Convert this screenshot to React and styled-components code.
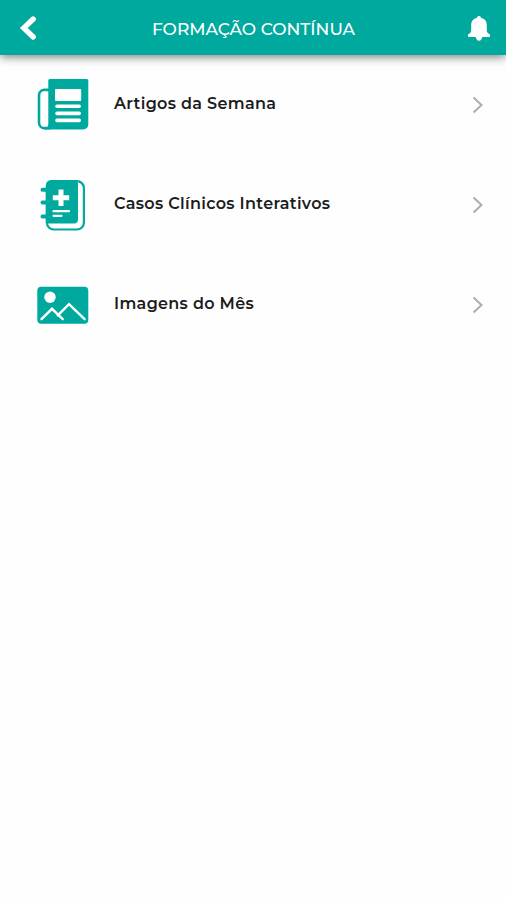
import React from 'react';
import styled, { createGlobalStyle } from 'styled-components';

const GlobalStyle = createGlobalStyle`
  * {
    box-sizing: border-box;
  }

  body {
    margin: 0;
    background-color: #fefefe;
    font-family: Montserrat, Inter, sans-serif;
  }
`;

const Screen = styled.div`
  display: flex;
  flex-direction: column;
  min-height: 100vh;
`;

const Header = styled.header`
  display: flex;
  align-items: center;
  justify-content: space-between;
  height: 55px;
  padding: 1px 14px 0 19px;
  background-color: #00a99d;
  box-shadow: 0 2px 9px rgba(0, 0, 0, 0.5);
  color: white;
`;

const HeaderButton = styled.button`
  display: flex;
  min-width: 22px;
  padding: 0;
  border: none;
  background: none;
  color: inherit;
  cursor: pointer;
`;

const Title = styled.h1`
  margin: 0;
  padding-top: 1px;
  font-size: 17px;
  font-weight: 500;
  line-height: 24px;
  white-space: nowrap;
`;

const List = styled.ul`
  margin: 0;
  padding: 0;
  list-style: none;
`;

const Row = styled.li`
  display: flex;
  align-items: center;
  height: 100.4px;
  padding: 0 21.5px 0 36px;
  border-bottom: 1px solid #fcfcfc;
`;

const IconBox = styled.div`
  display: flex;
  width: 54px;
  height: 54px;
  margin-bottom: 1px;
  color: #00a99d;
`;

const Label = styled.span`
  flex: 1;
  padding: 0 0 2px 24px;
  color: #1c1c1c;
  font-size: 16px;
  font-weight: 600;
  line-height: 24px;
  letter-spacing: 0.32px;
  white-space: nowrap;
`;

const BackIcon = () => (
  <svg width="19" height="28" viewBox="0 0 19 28" fill="none">
    <path
      d="M14.2 5 4.8 14l9.4 9"
      stroke="currentColor"
      strokeWidth="5.4"
      strokeLinecap="round"
    />
  </svg>
);

const BellIcon = () => (
  <svg width="26" height="28" viewBox="0 0 26 28" fill="currentColor">
    <path d="M13 2c1.1 0 1.8.7 2 1.7 3.6.8 5.8 3.7 5.8 7.3v5.4c0 1.7 1.1 2.7 2.8 3.9.9.7.6 2.7-.5 2.7H2.9c-1.1 0-1.4-2-.5-2.7 1.7-1.2 2.8-2.2 2.8-3.9V11c0-3.6 2.2-6.5 5.8-7.3.2-1 .9-1.7 2-1.7z" />
    <path d="M9.7 22.5h6.6c-.3 2.5-1.5 4.2-3.3 4.2s-3-1.7-3.3-4.2z" />
  </svg>
);

const ArrowIcon = () => (
  <svg width="14" height="20" viewBox="0 0 14 20" fill="none">
    <path d="M2.5 2.5 10.5 10l-8 7.5" stroke="#adadad" strokeWidth="2" />
  </svg>
);

const NewsIcon = () => (
  <svg width="54" height="54" viewBox="0 0 54 54">
    <path
      d="M14 12.8H8.5a5.4 5.4 0 0 0-5.4 5.4v27.5a5.4 5.4 0 0 0 5.4 5.4H14"
      fill="none"
      stroke="currentColor"
      strokeWidth="2.8"
    />
    <path
      d="M12.3 3.5a1.5 1.5 0 0 1 1.5-1.5h37a1.5 1.5 0 0 1 1.5 1.5v44a5 5 0 0 1-5 5H7c3.5-.3 5.3-2.5 5.3-5.5z"
      fill="currentColor"
    />
    <rect x="4.6" y="14.4" width="6.4" height="35" rx="3.2" fill="white" />
    <rect x="19" y="12" width="26.2" height="12" rx="1" fill="white" />
    <path
      d="M21 29.3h22.2M21 36.4h22.2M21 43.4h22.2"
      stroke="white"
      strokeWidth="3.6"
      strokeLinecap="round"
    />
  </svg>
);

const CasesIcon = () => (
  <svg width="54" height="54" viewBox="0 0 54 54">
    <rect x="10.9" y="3.1" width="37" height="48.4" rx="7" fill="white" stroke="currentColor" strokeWidth="2.2" />
    <path
      d="M15 2h23a4 4 0 0 1 4 4v35.5a4 4 0 0 1-4 4H9.8V7.2A5.2 5.2 0 0 1 15 2z"
      fill="currentColor"
    />
    <path
      d="M6.5 11.7H11M6.5 24.5H11M6.5 38.5H11"
      stroke="currentColor"
      strokeWidth="4"
      strokeLinecap="round"
    />
    <path d="M25 11.5v16.4M16.8 19.7h16.4" stroke="white" strokeWidth="5" />
    <path d="M17.5 33.2H33M17.5 37.8h8" stroke="white" strokeWidth="2.2" strokeLinecap="round" />
  </svg>
);

const ImageIcon = () => (
  <svg width="54" height="54" viewBox="0 0 54 54">
    <rect x="1.3" y="8.7" width="51" height="37" rx="4" fill="currentColor" />
    <circle cx="14" cy="19.3" r="5.7" fill="white" />
    <path
      d="M5.5 41.2 16 30.8l10.7 10.4M21.8 37.4 33 26.2l15.6 15"
      fill="none"
      stroke="white"
      strokeWidth="2.4"
      strokeLinecap="round"
    />
  </svg>
);

const items = [
  { label: 'Artigos da Semana', icon: <NewsIcon /> },
  { label: 'Casos Clínicos Interativos', icon: <CasesIcon /> },
  { label: 'Imagens do Mês', icon: <ImageIcon /> },
];

const App = () => {
  return (
    <Screen>
      <GlobalStyle />
      <Header>
        <HeaderButton aria-label="Voltar">
          <BackIcon />
        </HeaderButton>
        <Title>FORMAÇÃO CONTÍNUA</Title>
        <HeaderButton aria-label="Notificações">
          <BellIcon />
        </HeaderButton>
      </Header>
      <List>
        {items.map((item) => (
          <Row key={item.label}>
            <IconBox>{item.icon}</IconBox>
            <Label>{item.label}</Label>
            <ArrowIcon />
          </Row>
        ))}
      </List>
    </Screen>
  );
};

export default App;
